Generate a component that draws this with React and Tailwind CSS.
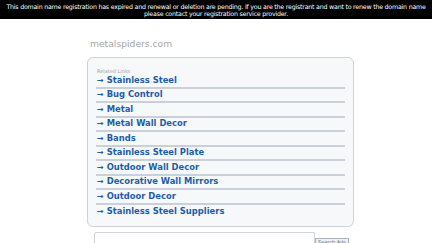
import React from 'react';

const links = [
    'Stainless Steel',
    'Bug Control',
    'Metal',
    'Metal Wall Decor',
    'Bands',
    'Stainless Steel Plate',
    'Outdoor Wall Decor',
    'Decorative Wall Mirrors',
    'Outdoor Decor',
    'Stainless Steel Suppliers',
];

const App = () => {
    return (
        <div className="w-[432px] h-[243px] overflow-hidden bg-white font-['DejaVu_Sans',sans-serif]">
            <div className="bg-black text-white text-[6.3px] tracking-[-0.22px] leading-[7px] text-center pt-[3px] h-[19px]">
                This domain name registration has expired and renewal or deletion are pending. If you are the registrant and want to renew the domain name please contact your registration service provider.
            </div>

            <div className="ml-[87px] w-[267px]">
                <div className="text-[9.2px] text-[#a6a6a6] pl-[3px] pt-[18px] h-[38px]">metalspiders.com</div>

                <div className="border border-[#cfd3d8] rounded-[6px] bg-[#f7f8fa] px-[8px] pt-[10px] pb-[10px] h-[170px]">
                    <div className="text-[5px] text-[#9aa3ad] leading-[6px] pl-[1px]">Related Links</div>
                    {links.map((l, i) => (
                        <div
                            key={l}
                            className={
                                'h-[14.5px] flex items-center text-[8.4px] font-bold text-[#1d5fa5] pl-[1px] ' +
                                (i < links.length - 1 ? 'border-b-2 border-[#c9d0da]' : '')
                            }
                        >
                            <span className="mr-[3px] text-[8px] pt-[1px]">→</span>
                            {l}
                        </div>
                    ))}
                </div>

                <div className="flex items-start mt-[5px] ml-[7px]">
                    <div className="w-[221px] h-[14px] border border-[#d0d4d8] rounded-[2px] bg-white" />
                    <div className="mt-[6px] h-[10px] px-[2px] border border-[#a8b3bf] bg-[#eef1f4] text-[5px] leading-[7px] text-[#55606b]">
                        Search Ads
                    </div>
                </div>
            </div>
        </div>
    );
};

export default App;
